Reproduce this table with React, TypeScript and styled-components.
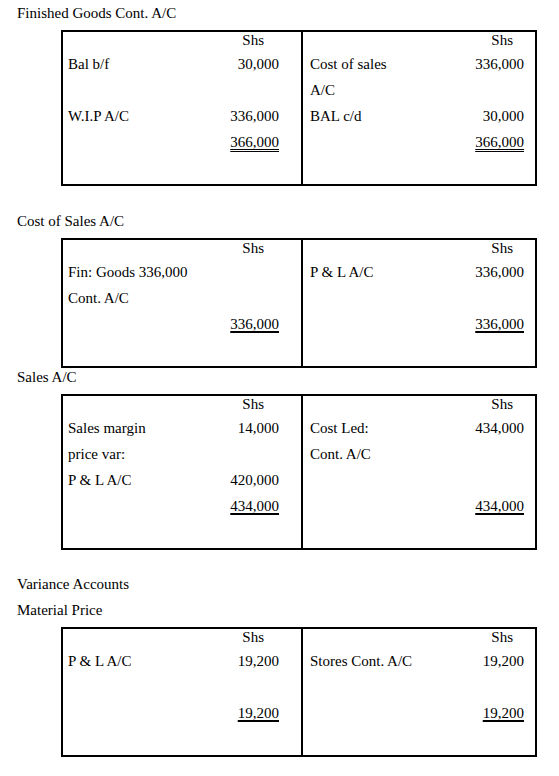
import React from 'react';
import styled, { createGlobalStyle } from 'styled-components';

type Line = { label?: string; amount?: string; total?: 'double' | 'single' };

interface Account {
  titles: string[];
  gap: number;
  debit: Line[];
  credit: Line[];
}

const accounts: Account[] = [
  {
    titles: ['Finished Goods Cont. A/C'],
    gap: 0,
    debit: [
      { label: 'Bal b/f', amount: '30,000' },
      {},
      { label: 'W.I.P A/C', amount: '336,000' },
      { amount: '366,000', total: 'double' },
    ],
    credit: [
      { label: 'Cost of sales', amount: '336,000' },
      { label: 'A/C' },
      { label: 'BAL c/d', amount: '30,000' },
      { amount: '366,000', total: 'double' },
    ],
  },
  {
    titles: ['Cost of Sales A/C'],
    gap: 22,
    debit: [
      { label: 'Fin: Goods 336,000' },
      { label: 'Cont. A/C' },
      { amount: '336,000', total: 'single' },
    ],
    credit: [
      { label: 'P & L A/C', amount: '336,000' },
      {},
      { amount: '336,000', total: 'single' },
    ],
  },
  {
    titles: ['Sales A/C'],
    gap: -4,
    debit: [
      { label: 'Sales margin', amount: '14,000' },
      { label: 'price var:' },
      { label: 'P & L A/C', amount: '420,000' },
      { amount: '434,000', total: 'single' },
    ],
    credit: [
      { label: 'Cost Led:', amount: '434,000' },
      { label: 'Cont. A/C' },
      {},
      { amount: '434,000', total: 'single' },
    ],
  },
  {
    titles: ['Variance Accounts', 'Material Price'],
    gap: 21,
    debit: [
      { label: 'P & L A/C', amount: '19,200' },
      {},
      { amount: '19,200', total: 'single' },
    ],
    credit: [
      { label: 'Stores Cont. A/C', amount: '19,200' },
      {},
      { amount: '19,200', total: 'single' },
    ],
  },
];

const GlobalStyle = createGlobalStyle`
  body {
    margin: 0;
    background: #ffffff;
    color: #000000;
    font-family: "Liberation Serif", "Times New Roman", serif;
    font-size: 15px;
  }
`;

const Page = styled.div`
  padding: 0 0 20px 17px;
`;

const Section = styled.section<{ $gap: number }>`
  margin-top: ${(p) => p.$gap}px;
`;

const Title = styled.div`
  line-height: 26px;
  height: 26px;
`;

const Box = styled.div`
  margin: 4px 0 0 44px;
  width: 476px;
  box-sizing: border-box;
  border: 2px solid #000;
  display: grid;
  grid-template-columns: 240px 1fr;
`;

const Side = styled.div<{ $left?: boolean }>`
  border-right: ${(p) => (p.$left ? '2px solid #000' : 'none')};
  padding: 0 ${(p) => (p.$left ? 22 : 11)}px 29px ${(p) => (p.$left ? 5 : 7)}px;
`;

const Head = styled.div<{ $left?: boolean }>`
  height: 19px;
  line-height: 16px;
  text-align: right;
  padding-right: ${(p) => (p.$left ? 15 : 11)}px;
`;

const Row = styled.div`
  height: 26px;
  line-height: 26px;
  display: flex;
  justify-content: space-between;
  white-space: nowrap;
`;

const Amount = styled.span<{ $total?: 'double' | 'single' }>`
  text-align: right;
  text-decoration: ${(p) =>
    p.$total === 'double' ? 'underline double' : p.$total === 'single' ? 'underline' : 'none'};
  text-decoration-thickness: ${(p) => (p.$total === 'single' ? '2px' : '1px')};
  text-underline-offset: 2px;
`;

const Ledger = ({ lines, left }: { lines: Line[]; left?: boolean }) => (
  <Side $left={left}>
    <Head $left={left}>Shs</Head>
    {lines.map((l, i) => (
      <Row key={i}>
        <span>{l.label}</span>
        <Amount $total={l.total}>{l.amount}</Amount>
      </Row>
    ))}
  </Side>
);

export default function App() {
  return (
    <Page>
      <GlobalStyle />
      {accounts.map((a, i) => (
        <Section key={i} $gap={a.gap}>
          {a.titles.map((t) => (
            <Title key={t}>{t}</Title>
          ))}
          <Box>
            <Ledger lines={a.debit} left />
            <Ledger lines={a.credit} />
          </Box>
        </Section>
      ))}
    </Page>
  );
}
